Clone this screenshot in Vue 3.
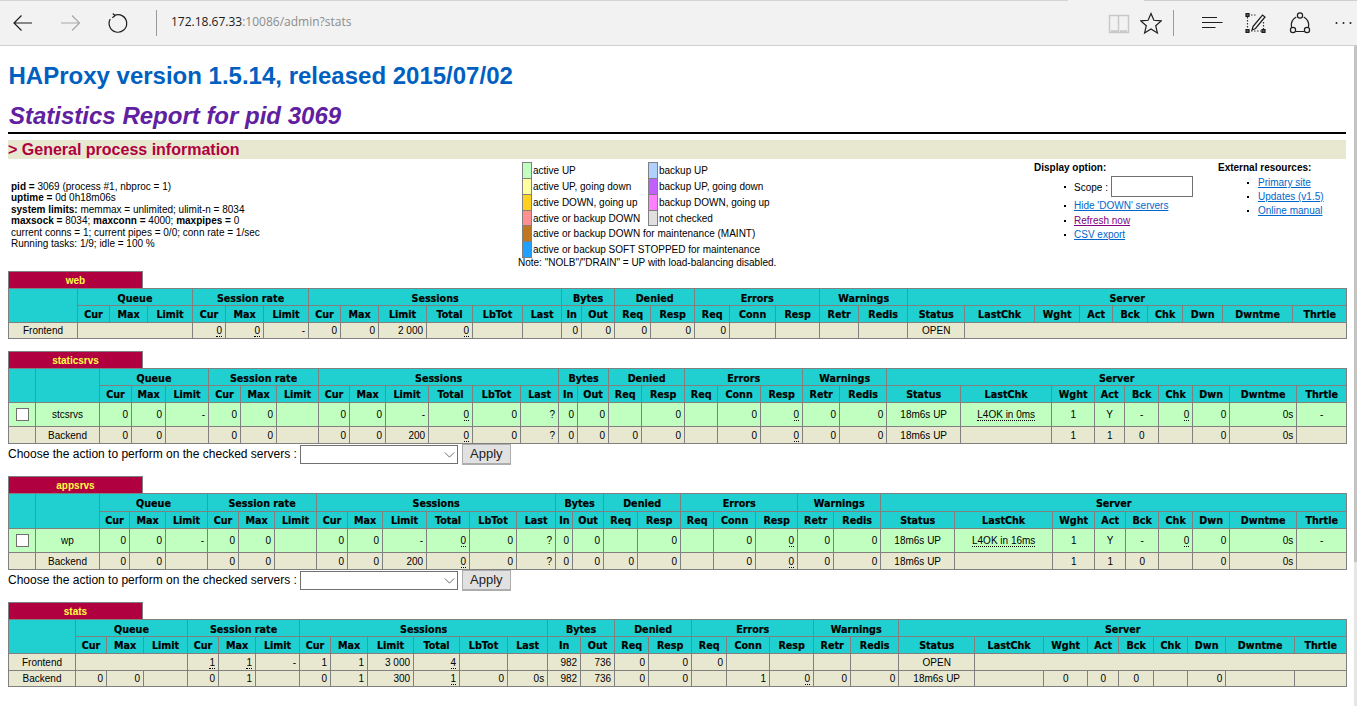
<script setup>
const toWidths = (edges) => edges.slice(1).map((e, i) => e - edges[i])

const groups = [
  ['Queue', 3], ['Session rate', 3], ['Sessions', 6], ['Bytes', 2], ['Denied', 2],
  ['Errors', 3], ['Warnings', 2], ['Server', 9],
]
const labels = ['Cur', 'Max', 'Limit', 'Cur', 'Max', 'Limit', 'Cur', 'Max', 'Limit', 'Total', 'LbTot', 'Last',
  'In', 'Out', 'Req', 'Resp', 'Req', 'Conn', 'Resp', 'Retr', 'Redis', 'Status', 'LastChk', 'Wght', 'Act', 'Bck',
  'Chk', 'Dwn', 'Dwntme', 'Thrtle']

const cell = (v) => {
  if (typeof v === 'object') return v
  if (v.startsWith('cu:')) return { text: v.slice(3), center: true, under: true }
  if (v.startsWith('c:')) return { text: v.slice(2), center: true }
  if (v.startsWith('u:')) return { text: v.slice(2), under: true }
  return { text: v }
}
const B = (n) => ({ text: '', span: n })
const CHECK = { check: true, center: true }

const proxies = [
  {
    name: 'web', form: false, lead: 1, heights: [17, 17, 16],
    edges: [8, 77, 109, 147, 192, 225, 263, 308, 340, 378, 426, 472, 522, 561, 581, 614, 650, 694, 729, 775, 819, 858, 907, 964, 1034, 1079, 1112, 1147, 1182, 1222, 1292, 1346],
    rows: [
      { cls: 'frontend', cells: ['c:Frontend', B(3), 'u:0', 'u:0', '-', '0', '0', '2 000', 'u:0', '', '', '0', '0', '0', '0', '0', '', '', '', '', 'c:OPEN', B(8)] },
    ],
  },
  {
    name: 'staticsrvs', form: true, lead: 2, heights: [17, 17, 24, 17],
    edges: [8, 35, 99, 131, 165, 208, 240, 276, 318, 349, 385, 428, 472, 520, 558, 577, 608, 641, 684, 717, 760, 802, 839, 886, 960, 1051, 1094, 1124, 1158, 1192, 1229, 1296, 1346],
    rows: [
      { cls: 'active', cells: [CHECK, 'c:stcsrvs', '0', '0', '-', '0', '0', '', '0', '0', '-', 'u:0', '0', '?', '0', '0', '', '0', '', '0', 'u:0', '0', '0', 'c:18m6s UP', 'cu:L4OK in 0ms', 'c:1', 'c:Y', 'c:-', 'u:0', '0', '0s', 'c:-'] },
      { cls: 'frontend', cells: ['', 'c:Backend', '0', '0', '', '0', '0', '', '0', '0', '200', 'u:0', '0', '?', '0', '0', '0', '0', '', '0', 'u:0', '0', '0', 'c:18m6s UP', '', 'c:1', 'c:1', 'c:0', '', '0', '0s', ''] },
    ],
  },
  {
    name: 'appsrvs', form: true, lead: 2, heights: [18, 17, 24, 17],
    edges: [8, 35, 99, 129, 165, 207, 238, 274, 316, 347, 382, 426, 469, 516, 555, 572, 603, 637, 680, 713, 755, 797, 833, 880, 954, 1052, 1094, 1125, 1158, 1192, 1229, 1296, 1346],
    rows: [
      { cls: 'active', cells: [CHECK, 'c:wp', '0', '0', '-', '0', '0', '', '0', '0', '-', 'u:0', '0', '?', '0', '0', '', '0', '', '0', 'u:0', '0', '0', 'c:18m6s UP', 'cu:L4OK in 16ms', 'c:1', 'c:Y', 'c:-', 'u:0', '0', '0s', 'c:-'] },
      { cls: 'frontend', cells: ['', 'c:Backend', '0', '0', '', '0', '0', '', '0', '0', '200', 'u:0', '0', '?', '0', '0', '0', '0', '', '0', 'u:0', '0', '0', 'c:18m6s UP', '', 'c:1', 'c:1', 'c:0', '', '0', '0s', ''] },
    ],
  },
  {
    name: 'stats', form: false, lead: 1, heights: [17, 17, 17, 16],
    edges: [8, 75, 106, 143, 187, 218, 255, 299, 330, 367, 413, 459, 507, 547, 580, 614, 648, 691, 726, 769, 813, 850, 898, 974, 1043, 1087, 1118, 1153, 1187, 1225, 1294, 1346],
    rows: [
      { cls: 'frontend', cells: ['c:Frontend', B(3), 'u:1', 'u:1', '-', '1', '1', '3 000', 'u:4', '', '', '982', '736', '0', '0', '0', '', '', '', '', 'c:OPEN', B(8)] },
      { cls: 'frontend', cells: ['c:Backend', '0', '0', '', '0', '1', '', '0', '1', '300', 'u:1', '0', '0s', '982', '736', '0', '0', '', '1', 'u:0', '0', '0', 'c:18m6s UP', '', 'c:0', 'c:0', 'c:0', '', '0', '', ''] },
    ],
  },
].map((p) => ({
  ...p,
  widths: toWidths(p.edges),
  total: p.edges[p.edges.length - 1] - p.edges[0] + 1,
  rows: p.rows.map((r) => ({ ...r, cells: r.cells.map(cell) })),
}))

const legendA = [
  ['#c0ffc0', 'active UP', '#b0d0ff', 'backup UP'],
  ['#ffffa0', 'active UP, going down', '#c060ff', 'backup UP, going down'],
  ['#ffd020', 'active DOWN, going up', '#ff80ff', 'backup DOWN, going up'],
  ['#ff9090', 'active or backup DOWN', '#e0e0e0', 'not checked'],
  ['#c07820', 'active or backup DOWN for maintenance (MAINT)'],
  ['#20a0ff', 'active or backup SOFT STOPPED for maintenance'],
]
</script>

<template>
  <div class="shell">
    <div class="topline"></div>
    <header class="toolbar">
      <svg class="ic w22" viewBox="12 0 22 45"><path d="M32 23H14M21.5 15.5L14 23l7.5 7.5" class="st dark" /></svg>
      <svg class="ic w22 m26" viewBox="60 0 22 45"><path d="M61 23H79.500M72 15.500L79.500 23 72 30.500" class="st faded" /></svg>
      <svg class="ic w24 m24" viewBox="106 0 24 45"><path d="M114.500 15.300A8.800 8.800 0 1 1 110.300 19" class="st dark" /><path d="M112.800 13.500L115 15.600 112.300 17.800" class="st dark" /></svg>
      <div class="sep sep1"></div>
      <div class="url"><span class="host">172.18.67.33</span><span class="rest">:10086/admin?stats</span></div>
      <div class="right">
        <svg class="ic w22" viewBox="1108 0 22 45"><path d="M1109.500 15.500h9v17h-9zM1118.500 15.500h10v17h-10zM1111 31h7M1120 31h7" class="st book" /></svg>
        <svg class="ic w22 m10" viewBox="1140 0 22 45"><path d="M1151 13.500l2.900 6.800 7.300.6-5.500 4.800 1.700 7.200-6.400-3.900-6.400 3.900 1.700-7.200-5.500-4.800 7.300-.6z" class="st dark" /></svg>
        <div class="sep sep2"></div>
        <svg class="ic w24 m26" viewBox="1200 0 24 45"><path d="M1202 17.500h15M1202 22.500h20.500M1202 27.500h13.500" class="st dark" /></svg>
        <svg class="ic w24 m20" viewBox="1244 0 24 45">
          <path d="M1248 15h8M1248 31h15M1247.500 17v12M1263.500 22v7" class="st dotted" />
          <path d="M1246 13.500h3v3h-3zM1246 29.500h3v3h-3zM1262 29.500h3v3h-3z" class="st dark solidfill" />
          <path d="M1253 26.500l9.500-11.500 2.500 2-9.500 11.500-3.500 1.500z" class="st dark" />
        </svg>
        <svg class="ic w24 m20" viewBox="1288 0 24 45">
          <path d="M1296.300 17A9.500 9.500 0 0 0 1291.500 27M1303.700 17A9.500 9.500 0 0 1 1308.500 27M1296 31.500h8" class="st dark" />
          <circle cx="1300" cy="15.500" r="2.600" class="st dark" />
          <circle cx="1293" cy="30" r="2.600" class="st dark" />
          <circle cx="1307" cy="30" r="2.600" class="st dark" />
        </svg>
        <svg class="ic w20 m22" viewBox="1334 0 20 45">
          <circle cx="1336.500" cy="23" r="1" class="dot" />
          <circle cx="1343.500" cy="23" r="1" class="dot" />
          <circle cx="1350.500" cy="23" r="1" class="dot" />
        </svg>
      </div>
    </header>

    <main class="page">
      <h1>HAProxy version 1.5.14, released 2015/07/02</h1>
      <h2>Statistics Report for pid 3069</h2>
      <div class="hr"></div>
      <h3>&gt; General process information</h3>

      <div class="info">
        <div class="proc">
          <b>pid = </b>3069 (process #1, nbproc = 1)<br />
          <b>uptime = </b>0d 0h18m06s<br />
          <b>system limits:</b> memmax = unlimited; ulimit-n = 8034<br />
          <b>maxsock = </b>8034; <b>maxconn = </b>4000; <b>maxpipes = </b>0<br />
          current conns = 1; current pipes = 0/0; conn rate = 1/sec<br />
          Running tasks: 1/9; idle = 100 %
        </div>
        <div class="legendcol">
          <div class="legend">
            <template v-for="(row, i) in legendA" :key="i">
              <span class="sw" :style="{ background: row[0] }"></span>
              <span class="lab" :class="{ wide: row.length === 2 }">{{ row[1] }}</span>
              <template v-if="row.length > 2">
                <span class="sw" :style="{ background: row[2] }"></span>
                <span class="lab">{{ row[3] }}</span>
              </template>
            </template>
          </div>
          <div class="note">Note: "NOLB"/"DRAIN" = UP with load-balancing disabled.</div>
        </div>
        <div class="options">
          <b class="otitle">Display option:</b>
          <ul class="opt">
            <li class="scope">Scope : <input class="scopein" type="text" /></li>
            <li class="hide"><a class="lnk" href="#">Hide 'DOWN' servers</a></li>
            <li><a class="lnk visited" href="#">Refresh now</a></li>
            <li><a class="lnk" href="#">CSV export</a></li>
          </ul>
        </div>
        <div class="external">
          <b class="otitle">External resources:</b>
          <ul class="ext">
            <li><a class="lnk" href="#">Primary site</a></li>
            <li><a class="lnk" href="#">Updates (v1.5)</a></li>
            <li><a class="lnk" href="#">Online manual</a></li>
          </ul>
        </div>
      </div>

      <section v-for="p in proxies" :key="p.name" class="proxy">
        <div class="pxname">{{ p.name }}</div>
        <table class="tbl" :style="{ width: p.total + 'px' }">
          <colgroup>
            <col v-for="(w, i) in p.widths" :key="i" :style="{ width: w + 'px' }" />
          </colgroup>
          <tr class="grp" :style="{ height: p.heights[0] + 'px' }">
            <th v-for="n in p.lead" :key="n" rowspan="2"></th>
            <th v-for="g in groups" :key="g[0]" :colspan="g[1]">{{ g[0] }}</th>
          </tr>
          <tr :style="{ height: p.heights[1] + 'px' }">
            <th v-for="(l, i) in labels" :key="i">{{ l }}</th>
          </tr>
          <tr v-for="(r, ri) in p.rows" :key="ri" :class="r.cls" :style="{ height: p.heights[ri + 2] + 'px' }">
            <td v-for="(c, ci) in r.cells" :key="ci" :colspan="c.span || 1" :class="{ ac: c.center }">
              <span v-if="c.check" class="checkbox"></span>
              <u v-else-if="c.under">{{ c.text }}</u>
              <template v-else>{{ c.text }}</template>
            </td>
          </tr>
        </table>
        <div v-if="p.form" class="action">
          <span>Choose the action to perform on the checked servers :</span>
          <span class="selwrap">
            <select class="sel"><option value=""></option></select>
            <svg class="chev" viewBox="0 0 12 7"><path d="M.5.5L6 6 11.500.5" /></svg>
          </span>
          <button class="apply" type="button">Apply</button>
        </div>
      </section>
    </main>

    <div class="scrollbar"><div class="thumb"></div></div>
  </div>
</template>

<style>
html, body { margin: 0; overflow: hidden; background: #fff; }
</style>

<style scoped>
.shell { position: relative; width: 1357px; height: 706px; overflow: hidden; font-family: "Liberation Sans", Arial, sans-serif; color: #000; background: #fff; }
.topline { height: 1px; background: linear-gradient(90deg, #d4d4d4 0 1068px, #f2f2f2 1068px 1144px, #cfcfcf 1144px); }
.toolbar { display: flex; align-items: flex-start; height: 44px; padding-left: 12px; background: #f2f2f2; border-bottom: 1px solid #d0d0d0; margin-top: 0; }
.ic { height: 45px; flex: none; margin-top: -1px; display: block; }
.w20 { width: 20px; } .w22 { width: 22px; } .w24 { width: 24px; }
.m10 { margin-left: 10px; } .m20 { margin-left: 20px; } .m22 { margin-left: 22px; } .m24 { margin-left: 24px; } .m26 { margin-left: 26px; }
.st { fill: none; stroke-width: 1.2; }
.dark { stroke: #1e1e1e; }
.faded { stroke: #a8a8a8; }
.book { stroke: #c9c9c9; stroke-width: 1.500; }
.dotted { stroke: #333; stroke-width: 1.200; stroke-dasharray: 1.500 1.500; }
.solidfill { fill: #555; }
.dot { fill: #222; }
.sep { width: 1px; height: 26px; margin-top: 9px; background: #9a9a9a; flex: none; }
.sep1 { margin-left: 26px; }
.sep2 { margin-left: 11px; }
.url { margin-left: 14px; margin-top: 12px; font-family: "Open Sans", sans-serif; font-size: 12px; line-height: 17px; white-space: nowrap; }
.host { color: #1b1b1b; }
.rest { color: #8c8c8c; }
.right { margin-left: auto; display: flex; align-items: flex-start; padding-right: 3px; }

.page { padding: 0 11px 0 8px; }
h1 { margin: 16px 0 0; padding-left: 0.500px; font-size: 24px; line-height: 28px; font-weight: bold; color: #0060c0; }
h2 { margin: 12px 0 0; padding-left: 1px; font-size: 24px; line-height: 28px; font-weight: bold; font-style: italic; color: #6020a0; }
.hr { height: 2px; margin-top: 2px; background: #000; }
h3 { margin: 6px 0 0; height: 19px; font-size: 16px; line-height: 19px; font-weight: bold; color: #b00040; background: #e8e8d0; }

.info { display: grid; grid-template-columns: 510px 516px 184px 128px; height: 112px; font-size: 10px; }
.proc { padding: 21.500px 0 0 3px; line-height: 11.600px; white-space: nowrap; }
.legendcol { padding-top: 3px; }
.legend { display: grid; grid-template-columns: 10px 116px 10px 1fr; grid-template-rows: 16px 16px 16px 15px 16px 16px; margin-left: 4px; }
.sw { border: 1px solid #808080; box-sizing: border-box; height: calc(100% + 1px); }
.lab { padding: 1px 0 0 1px; line-height: 16px; white-space: nowrap; }
.lab.wide { grid-column: 2 / 5; }
.note { line-height: 12px; margin-top: 0; white-space: nowrap; }
.otitle { display: block; padding-top: 3px; line-height: 12px; }
ul { list-style: none; margin: 0; padding: 0; }
li { position: relative; white-space: nowrap; line-height: 12px; }
li::before { content: ""; position: absolute; width: 2px; height: 2px; background: #000; top: 5px; }
.opt { padding: 2px 0 0 40px; }
.opt li { margin-bottom: 2px; }
.opt li::before { left: -10px; }
.opt li.hide { margin-bottom: 3px; }
.opt li.scope { height: 21px; line-height: 23px; margin-bottom: 3px; }
.opt li.scope::before { top: 10px; }
.scopein { box-sizing: border-box; position: absolute; left: 37px; top: 0; width: 82px; height: 21px; margin: 0; padding: 0; border: 1px solid #707070; background: #fff; }
.ext { padding: 3px 0 0 40px; }
.ext li { margin-bottom: 2px; }
.ext li::before { left: -11px; }
.lnk { color: #0066cc; text-decoration: underline; }
.visited { color: #800080; }

.proxy { margin-top: 0; margin-bottom: 12px; }
.pxname { box-sizing: border-box; width: 135px; height: 17px; padding-top: 1px; border: 1px solid #808080; border-bottom: none; background: #b00040; color: #ffff40; font-size: 10px; font-weight: bold; line-height: 15px; text-align: center; }
.tbl { border-collapse: collapse; table-layout: fixed; font-size: 10px; }
th, td { border: 1px solid #808080; padding: 0 3px; white-space: nowrap; overflow: hidden; line-height: 11px; }
th { background: #20d0d0; color: #000; font-family: "DejaVu Sans", sans-serif; font-size: 9.600px; font-weight: bold; text-align: center; -webkit-text-stroke: 0.2px #000; }
.grp th { padding-top: 2px; }
td { text-align: right; }
td.ac { text-align: center; }
.frontend td { background: #e8e8d0; }
.active td { background: #c0ffc0; }
u { text-decoration: none; border-bottom: 1px dotted #000; }
.checkbox { display: inline-block; box-sizing: border-box; width: 13px; height: 13px; background: #fff; border: 1px solid #707070; vertical-align: middle; }

.action { display: flex; align-items: center; height: 20px; font-size: 12px; white-space: nowrap; }
.selwrap { position: relative; margin-left: 3px; width: 158px; height: 19px; display: block; }
.sel { appearance: none; box-sizing: border-box; display: block; width: 158px; height: 19px; margin: 0; padding: 0; border: 1px solid #707070; border-radius: 0; background: #fff; }
.chev { position: absolute; right: 3px; top: 7px; width: 11px; height: 6px; fill: none; stroke: #555; stroke-width: 1; }
.apply { box-sizing: border-box; margin-left: 4px; width: 49px; height: 21px; padding: 0; border: 2px solid #adadad; border-width: 1px 1px 2px 1px; background: #e1e1e1; color: #222; font-family: "Liberation Sans", Arial, sans-serif; font-size: 13px; line-height: 18px; }

.scrollbar { position: absolute; right: 0; top: 46px; bottom: 0; width: 3px; background: #e6e6e6; }
.thumb { height: 516px; background: #c4c4c4; }
</style>
